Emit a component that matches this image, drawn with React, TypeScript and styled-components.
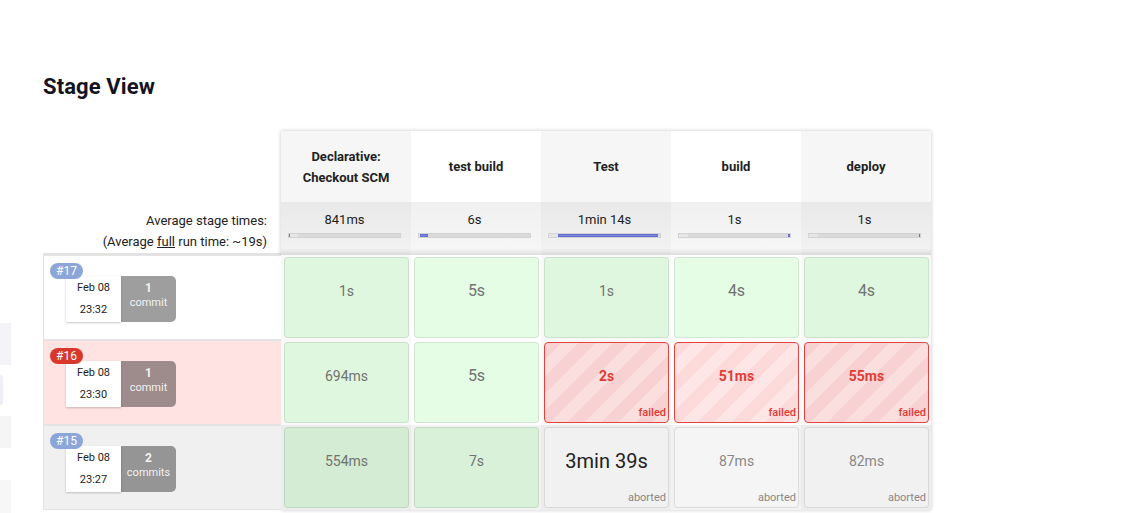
import React from 'react';
import styled, { createGlobalStyle, css } from 'styled-components';

type Status = 'success' | 'failed' | 'aborted';

interface StageResult {
  status: Status;
  duration: string;
  size: number;
}

interface Run {
  id: number;
  date: string;
  time: string;
  commits: number;
  status: Status;
  stages: StageResult[];
}

interface Stage {
  name: string;
  avg: string;
  offset: number;
  width: number;
}

const stages: Stage[] = [
  { name: 'Declarative: Checkout SCM', avg: '841ms', offset: 0, width: 1 },
  { name: 'test build', avg: '6s', offset: 1, width: 8 },
  { name: 'Test', avg: '1min 14s', offset: 9, width: 100 },
  { name: 'build', avg: '1s', offset: 109, width: 3 },
  { name: 'deploy', avg: '1s', offset: 110, width: 2 },
];

const runs: Run[] = [
  {
    id: 17,
    date: 'Feb 08',
    time: '23:32',
    commits: 1,
    status: 'success',
    stages: [
      { status: 'success', duration: '1s', size: 14 },
      { status: 'success', duration: '5s', size: 16 },
      { status: 'success', duration: '1s', size: 14 },
      { status: 'success', duration: '4s', size: 16 },
      { status: 'success', duration: '4s', size: 16 },
    ],
  },
  {
    id: 16,
    date: 'Feb 08',
    time: '23:30',
    commits: 1,
    status: 'failed',
    stages: [
      { status: 'success', duration: '694ms', size: 14 },
      { status: 'success', duration: '5s', size: 16 },
      { status: 'failed', duration: '2s', size: 14 },
      { status: 'failed', duration: '51ms', size: 14 },
      { status: 'failed', duration: '55ms', size: 14 },
    ],
  },
  {
    id: 15,
    date: 'Feb 08',
    time: '23:27',
    commits: 2,
    status: 'aborted',
    stages: [
      { status: 'success', duration: '554ms', size: 14 },
      { status: 'success', duration: '7s', size: 14 },
      { status: 'aborted', duration: '3min 39s', size: 20 },
      { status: 'aborted', duration: '87ms', size: 14 },
      { status: 'aborted', duration: '82ms', size: 14 },
    ],
  },
];

const sideBlocks = [
  { h: 42, w: 11, gap: 10, bg: '#f3f3f8', round: false },
  { h: 30, w: 3, gap: 11, bg: '#eeeef7', round: true },
  { h: 32, w: 11, gap: 32, bg: '#f5f5f5', round: false },
  { h: 40, w: 11, gap: 0, bg: '#f7f7f7', round: false },
];

const GlobalStyle = createGlobalStyle`
  *, *::before, *::after { box-sizing: border-box; }
  html, body { margin: 0; padding: 0; background: #ffffff; }
  body {
    font-family: Roboto, "Noto Sans", "Liberation Sans", sans-serif;
    color: #333333;
  }
`;

const Page = styled.div`
  display: flex;
  align-items: flex-start;
  width: 1128px;
  height: 513px;
  overflow: hidden;
`;

const Sidebar = styled.aside`
  width: 11px;
  flex: none;
  display: flex;
  flex-direction: column;
  padding-top: 323px;
`;

const SideBlock = styled.div<{ $h: number; $w: number; $gap: number; $bg: string; $round: boolean }>`
  height: ${(p) => p.$h}px;
  width: ${(p) => p.$w}px;
  margin-bottom: ${(p) => p.$gap}px;
  background: ${(p) => p.$bg};
  border-radius: ${(p) => (p.$round ? '0 4px 4px 0' : '0')};
`;

const Main = styled.main`
  flex: 1;
  padding: 74px 0 0 32px;
`;

const Title = styled.h2`
  margin: 0;
  font-size: 22px;
  line-height: 26px;
  font-weight: 700;
  color: #14141f;
  letter-spacing: 0.1px;
`;

const Table = styled.div`
  display: flex;
  align-items: flex-start;
  margin-top: 31px;
`;

const LabelColumn = styled.div`
  width: 238px;
  flex: none;
  display: flex;
  flex-direction: column;
`;

const HeaderSpacer = styled.div`
  height: 71px;
`;

const AvgLabel = styled.div`
  height: 53px;
  padding: 8px 14px 0 0;
  text-align: right;
  font-size: 13px;
  line-height: 21px;
  color: #222;
  border-bottom: 2px solid #e2e2e2;
`;

const FullLink = styled.span`
  text-decoration: underline;
`;

const rowBg: Record<Status, string> = {
  success: '#ffffff',
  failed: '#ffe3e3',
  aborted: '#f0f0f0',
};

const RunRow = styled.div<{ $status: Status }>`
  position: relative;
  height: 85px;
  display: flex;
  align-items: flex-start;
  padding: 20px 0 0 22px;
  border: 1px solid #e4e4e4;
  border-right: none;
  background: ${(p) => rowBg[p.$status]};
`;

const Badge = styled.span<{ $failed: boolean }>`
  position: absolute;
  top: 7px;
  left: 6px;
  z-index: 1;
  width: 33px;
  height: 16px;
  border-radius: 8px;
  background: ${(p) => (p.$failed ? '#d9362c' : '#8ca6da')};
  color: #ffffff;
  font-size: 12px;
  line-height: 16px;
  text-align: center;
`;

const DateBox = styled.div`
  width: 55px;
  height: 46px;
  padding-top: 1px;
  background: #ffffff;
  box-shadow: 0 1px 2px rgba(0, 0, 0, 0.22);
  text-align: center;
  font-size: 11px;
  line-height: 22px;
  color: #222;
`;

const CommitBox = styled.div`
  width: 55px;
  height: 46px;
  padding-top: 4px;
  background: rgba(0, 0, 0, 0.38);
  border-radius: 0 5px 5px 0;
  text-align: center;
  color: rgba(255, 255, 255, 0.9);
`;

const CommitCount = styled.div`
  font-size: 12px;
  font-weight: 700;
  line-height: 16px;
`;

const CommitWord = styled.div`
  font-size: 11px;
  line-height: 14px;
`;

const StageTable = styled.div`
  display: flex;
  box-shadow: 0 0 4px rgba(0, 0, 0, 0.22);
`;

const StageColumn = styled.div`
  width: 130px;
  display: flex;
  flex-direction: column;
`;

const StageHeader = styled.div<{ $shade: boolean }>`
  height: 71px;
  display: flex;
  align-items: center;
  justify-content: center;
  padding: 0 10px;
  text-align: center;
  font-size: 13px;
  font-weight: 700;
  line-height: 21px;
  color: #222;
  background: ${(p) => (p.$shade ? '#f6f6f6' : '#ffffff')};
`;

const AvgCell = styled.div<{ $shade: boolean }>`
  height: 53px;
  padding: 8px 10px 0 7px;
  background: ${(p) =>
    p.$shade
      ? 'linear-gradient(#e9e9e9, #f1f1f1 88%, #dadada)'
      : 'linear-gradient(#f0f0f0, #f6f6f6 88%, #dedede)'};
`;

const AvgTime = styled.div`
  font-size: 13px;
  line-height: 19px;
  text-align: center;
  color: #222;
`;

const BarTrack = styled.div`
  margin-top: 4px;
  height: 5px;
  display: flex;
  border: 1px solid #d2d2d2;
  background: linear-gradient(to right, #e6e6e6 0 9px, #dadada 9px);
`;

const BarFill = styled.div`
  height: 100%;
  background: #7c85da;
  box-shadow: inset 0 0 0 1px #6770d0;
`;

const CellSlot = styled.div<{ $shade: boolean; $dim: boolean }>`
  height: 85px;
  padding: 2px 2px 2px 3px;
  background-color: ${(p) => (p.$dim ? '#f2f2f2' : '#ffffff')};
  background-image: ${(p) =>
    p.$shade ? 'linear-gradient(rgba(0,0,0,0.025), rgba(0,0,0,0.025))' : 'none'};
`;

const cellStyles: Record<Status, (shade: boolean) => ReturnType<typeof css>> = {
  success: () => css`
    background: rgba(0, 235, 0, 0.1);
    border-color: rgba(0, 0, 0, 0.09);
  `,
  failed: (shade) => css`
    background: repeating-linear-gradient(
      135deg,
      ${shade ? '#f8d2d2' : '#fcdada'} 0 12px,
      ${shade ? '#fbdfdf' : '#ffe6e6'} 12px 24px
    );
    border-color: #e5413f;
  `,
  aborted: () => css`
    background: rgba(255, 255, 255, 0.25);
    border-color: rgba(0, 0, 0, 0.1);
  `,
};

const StageCell = styled.div<{ $status: Status; $shade: boolean }>`
  height: 100%;
  display: flex;
  flex-direction: column;
  justify-content: space-between;
  padding: 23px 2px 3px;
  border: 1px solid transparent;
  border-radius: 4px;
  ${(p) => cellStyles[p.$status](p.$shade)}
`;

const durationColor: Record<Status, string> = {
  success: '#727272',
  failed: '#e23b36',
  aborted: '#888888',
};

const Duration = styled.div<{ $size: number; $status: Status; $big: boolean }>`
  text-align: center;
  line-height: 20px;
  font-size: ${(p) => p.$size}px;
  font-weight: ${(p) => (p.$status === 'failed' ? 700 : 400)};
  color: ${(p) => (p.$big ? '#222222' : durationColor[p.$status])};
`;

const StatusLabel = styled.div<{ $status: Status }>`
  align-self: flex-end;
  font-size: 11px;
  line-height: 12px;
  font-weight: ${(p) => (p.$status === 'failed' ? 500 : 400)};
  color: ${(p) => (p.$status === 'failed' ? '#e23b36' : '#888888')};
`;

export default function App() {
  return (
    <>
      <GlobalStyle />
      <Page>
        <Sidebar>
          {sideBlocks.map((b, i) => (
            <SideBlock key={i} $h={b.h} $w={b.w} $gap={b.gap} $bg={b.bg} $round={b.round} />
          ))}
        </Sidebar>
        <Main>
          <Title>Stage View</Title>
          <Table>
            <LabelColumn>
              <HeaderSpacer />
              <AvgLabel>
                Average stage times:
                <br />
                (Average <FullLink>full</FullLink> run time: ~19s)
              </AvgLabel>
              {runs.map((run) => (
                <RunRow key={run.id} $status={run.status}>
                  <Badge $failed={run.status === 'failed'}>#{run.id}</Badge>
                  <DateBox>
                    <div>{run.date}</div>
                    <div>{run.time}</div>
                  </DateBox>
                  <CommitBox>
                    <CommitCount>{run.commits}</CommitCount>
                    <CommitWord>{run.commits === 1 ? 'commit' : 'commits'}</CommitWord>
                  </CommitBox>
                </RunRow>
              ))}
            </LabelColumn>
            <StageTable>
              {stages.map((stage, ci) => {
                const shade = ci % 2 === 0;
                return (
                  <StageColumn key={stage.name}>
                    <StageHeader $shade={shade}>{stage.name}</StageHeader>
                    <AvgCell $shade={shade}>
                      <AvgTime>{stage.avg}</AvgTime>
                      <BarTrack>
                        <BarFill style={{ marginLeft: stage.offset, width: stage.width }} />
                      </BarTrack>
                    </AvgCell>
                    {runs.map((run) => {
                      const r = run.stages[ci];
                      return (
                        <CellSlot key={run.id} $shade={shade} $dim={run.status === 'aborted'}>
                          <StageCell $status={r.status} $shade={shade}>
                            <Duration $size={r.size} $status={r.status} $big={r.size >= 20}>
                              {r.duration}
                            </Duration>
                            {r.status !== 'success' && (
                              <StatusLabel $status={r.status}>{r.status}</StatusLabel>
                            )}
                          </StageCell>
                        </CellSlot>
                      );
                    })}
                  </StageColumn>
                );
              })}
            </StageTable>
          </Table>
        </Main>
      </Page>
    </>
  );
}
